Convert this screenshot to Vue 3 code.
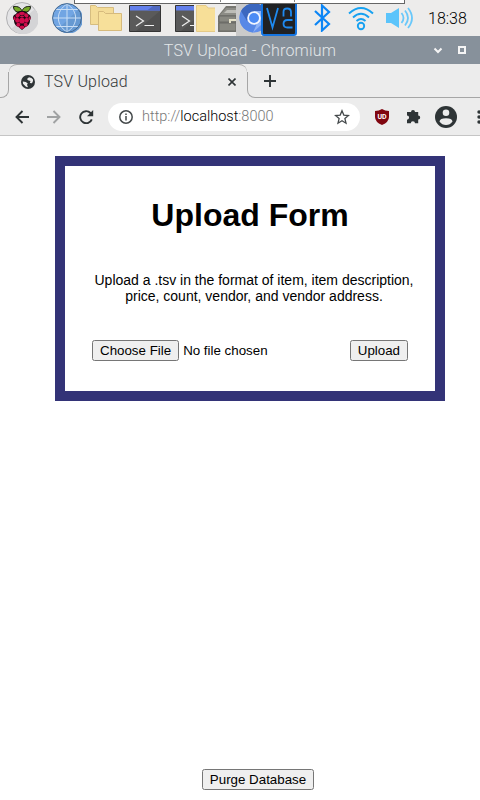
<script setup>
import { ref } from 'vue'

const clock = ref('18:38')
const host = 'localhost'
</script>

<template>
  <div class="desktop">
    <header class="taskbar">
      <svg class="raspberry" width="32" height="32" viewBox="0 0 32 32">
        <circle cx="16" cy="16" r="15.5" fill="#e4e4e6" stroke="#b0b0b2" />
        <path d="M5 27 29 7A15 15 0 0 1 6 27z" fill="#d4d4d6" />
        <path d="M15.700 10C11 11 7.500 9 7.500 4.500 12 4 16 6 15.700 10M16.300 10C21 11 24.500 9 24.500 4.500 20 4 16 6 16.300 10" fill="#75a928" stroke="#171b12" stroke-width="1" />
        <path d="M16 9c3 0 5 .5 6 3 3 1 3.500 4 2 6 0 4-2 6-4.500 7L16 28l-3.500-3C10 24 8 22 8 18c-2-2-1-5 2-6 1-2.500 3-3 6-3z" fill="#170811" />
        <g fill="#d00c4c">
          <ellipse cx="16" cy="11.400" rx="2.900" ry="1.700" />
          <ellipse cx="11.700" cy="13.500" rx="2.300" ry="1.900" transform="rotate(-35 11.700 13.500)" />
          <ellipse cx="20.300" cy="13.500" rx="2.300" ry="1.900" transform="rotate(35 20.300 13.500)" />
          <circle cx="16" cy="18.700" r="2.900" />
          <ellipse cx="11.300" cy="18.200" rx="2.100" ry="2.500" />
          <ellipse cx="20.700" cy="18.200" rx="2.100" ry="2.500" />
          <circle cx="12.300" cy="22.700" r="2" />
          <circle cx="19.700" cy="22.700" r="2" />
          <ellipse cx="16" cy="25.200" rx="2.500" ry="1.700" />
          <ellipse cx="8.500" cy="16.300" rx="1" ry="1.900" />
          <ellipse cx="23.500" cy="16.300" rx="1" ry="1.900" />
          <ellipse cx="16" cy="14.600" rx="2" ry="1" />
        </g>
      </svg>
      <svg class="globe" width="30" height="30" viewBox="0 0 30 30">
        <circle cx="15" cy="15" r="14.500" fill="#71a5e3" />
        <path d="M27 6A14.500 14.500 0 0 1 6 26z" fill="#6699d2" />
        <path d="M15 1v28M1 15h28M3.500 6.500h23M3.500 23.500h23M15 1C3.500 8 3.500 22 15 29M15 1c11.500 7 11.500 21 0 28" fill="none" stroke="#c9def5" stroke-width="1" />
        <circle cx="15" cy="15" r="14.400" fill="none" stroke="#44688f" />
      </svg>
      <svg class="folders" width="32" height="26" viewBox="0 0 32 26">
        <path d="M.5.5h5l2 2h16v17H.5z" fill="#f4dc98" stroke="#d6bd80" />
        <path d="M8.500 6.500h5l2 2h16v17h-23z" fill="#f7e09a" stroke="#d6ba7c" />
      </svg>
      <svg class="terminal" width="32" height="27" viewBox="0 0 32 27">
        <path d="M.5.500h31v26H.500z" fill="#5a5a5a" stroke="#353535" />
        <path d="M31 6v20H7z" fill="#505050" />
        <path d="M1 1h30v4.500H1z" fill="#6380ec" /><path d="M24 1h7v4.500H18z" fill="#5069c1" />
        <path d="m7 11 7.500 5L7 21M15.500 20.500H25" fill="none" stroke="#efefef" stroke-width="1.200" />
      </svg>
      <svg class="terminal-cut" width="19" height="27" viewBox="0 0 19 27">
        <path d="M20 .5H.5v26H20" fill="#5a5a5a" stroke="#353535" />
        <path d="M19 15v11H6z" fill="#505050" />
        <path d="M1 1h18v4.500H1z" fill="#6380ec" />
        <path d="m7 11 7.500 5L7 21M15 20.500h4" fill="none" stroke="#efefef" stroke-width="1.200" />
      </svg>
      <svg class="folder-cut" width="19" height="27" viewBox="0 0 19 27">
        <path d="M20 3h-8L10 .500H.500v26H20" fill="#f7df98" stroke="#e5ca87" />
      </svg>
      <svg class="cabinet" width="18" height="27" viewBox="0 0 18 27">
        <path d="M0 11 8 1h10v26H0z" fill="#777771" />
        <path d="m2 10 6-7h10v7z" fill="#8d8d87" /><path d="M6 8 9 5h9v3z" fill="#bdbdb7" />
        <path d="M1 11h17v6H1zM1 18h17v8H1z" fill="#898982" stroke="#6b6b66" />
        <path d="M12 18v-3h6" fill="none" stroke="#e4e0c8" stroke-width="2" />
      </svg>
      <svg class="chromium" width="25" height="32" viewBox="0 0 25 32">
        <path d="M0 0h25v32H0z" fill="#cacaca" />
        <circle cx="18" cy="14" r="14.500" fill="#608fed" />
        <path d="M5 7A15 15 0 0 0 17 28.500L24 17z" fill="#5788e6" />
        <path d="M5 7a15 15 0 0 1 20-6v7h-9l-5 9z" fill="#3b67bf" />
        <path d="M18 7h7v14l-8 7.500 4-9z" fill="#8cb2f7" />
        <circle cx="18" cy="14" r="6.800" fill="#f2f6ff" /><circle cx="18" cy="14" r="5" fill="#4b8bf5" />
      </svg>
      <svg class="vnc" width="36" height="33" viewBox="0 0 36 33">
        <rect x="1" y="-3" width="34" height="35" rx="2" fill="#202225" stroke="#1474e0" stroke-width="2" />
        <g fill="none" stroke="#1e8af0" stroke-width="1.800">
          <path d="m6 5 5.500 19.500L17 5" />
          <path d="M22.500 13.500V9Q22.500 5.500 26.200 5.500T30 9v4.500" />
          <path d="M31.500 17H26.500Q22.500 17 22.500 20.800T26.500 24.500H31.500" />
        </g>
      </svg>
      <svg class="bluetooth" width="18" height="28" viewBox="0 0 18 28">
        <path d="m2 7 14 13-7 6.500V1.500L16 8 2 21" fill="none" stroke="#0b85f5" stroke-width="2.200" />
      </svg>
      <svg class="wifi" width="26" height="24" viewBox="0 0 26 24">
        <g fill="none" stroke="#16a1f1" stroke-width="1.900">
          <path d="M1 6.500Q13-4.500 25 6.500M5 10.500q8-7.500 16 0M8.500 14q4.500-4 9 0" />
          <circle cx="13" cy="19" r="3.200" />
        </g>
      </svg>
      <svg class="volume" width="27" height="22" viewBox="0 0 27 22">
        <path d="M0 6h5l8-5v20l-8-5H0z" fill="#5bc4fb" />
        <path d="M15.500 6q4 5 0 10M19 3.500q6 7.500 0 15M22 1q8 10 0 20" fill="none" stroke="#69c8fa" stroke-width="1.800" />
      </svg>
      <time class="clock">{{ clock }}</time>
      <div class="menu-edge"><i></i><i></i></div>
    </header>

    <div class="titlebar">
      <span class="window-title">TSV Upload - Chromium</span>
      <svg class="window-controls" width="34" height="10" viewBox="0 0 34 10">
        <path d="m1.500 3.500 3.500 3.500 3.500-3.500" fill="none" stroke="#f5f5f5" stroke-width="2" />
        <rect x="26" y="2" width="6" height="6" fill="none" stroke="#f5f5f5" stroke-width="2" />
      </svg>
    </div>

    <div class="tabstrip">
      <div class="tab-left"></div>
      <div class="tab">
        <svg width="14" height="14" viewBox="0 0 14 14">
          <circle cx="7" cy="7" r="7" fill="#2e3436" />
          <path d="M8 2.200 6 4l1 1.200L9.500 6l-.7 2L11 8.200l1-2.200V4.500L10.500 3zM1.800 6.500l3 .5 2 1.500-.8 1.300 1 2.500-2-.5-3-3z" fill="#ececec" />
        </svg>
        <span class="tab-name">TSV Upload</span>
        <svg class="tab-close" width="8" height="8" viewBox="0 0 8 8"><path d="m.5.500 7 7m0-7-7 7" stroke="#2e3436" stroke-width="1.600" /></svg>
      </div>
      <div class="tab-right">
        <svg width="12" height="12" viewBox="0 0 12 12"><path d="M6 0v12M0 6h12" stroke="#2e3436" stroke-width="1.900" /></svg>
      </div>
    </div>

    <nav class="toolbar">
      <svg class="back" width="14" height="14" viewBox="0 0 14 14"><path d="M14 7H1.500M7.500 1l-6 6 6 6" fill="none" stroke="#2e3436" stroke-width="1.900" /></svg>
      <svg class="forward" width="14" height="14" viewBox="0 0 14 14"><path d="M0 7h12.500M6.500 1l6 6-6 6" fill="none" stroke="#a0a2a3" stroke-width="1.900" /></svg>
      <svg class="reload" width="15" height="14" viewBox="0 0 15 14"><path d="M12.800 9.300A6 6 0 1 1 11.500 3L13 4.500" fill="none" stroke="#2e3436" stroke-width="1.900" /><path d="M14.200 0v6.200H8z" fill="#2e3436" /></svg>
      <div class="address">
        <svg width="14" height="14" viewBox="0 0 14 14"><circle cx="7" cy="7" r="6.200" fill="none" stroke="#44494b" stroke-width="1.500" /><path d="M7 6v4.500M7 3.500V5" stroke="#44494b" stroke-width="1.500" /></svg>
        <span class="url">http://<b>{{ host }}</b>:8000</span>
        <svg class="star" width="16" height="16" viewBox="0 0 16 16"><path d="m8 1.800 1.800 4.300 4.700.4-3.600 3.100 1.100 4.600-4-2.500-4 2.500 1.100-4.600L1.500 6.500l4.700-.4z" fill="none" stroke="#44494b" stroke-width="1.300" /></svg>
      </div>
      <svg class="shield" width="14" height="16" viewBox="0 0 14 16">
        <path d="M7 0q3 2 7 2v6q0 5-7 8-7-3-7-8V2q4 0 7-2z" fill="#800610" />
        <text x="7" y="9.700" text-anchor="middle" class="shield-text">UD</text>
      </svg>
      <svg class="puzzle" width="15" height="15" viewBox="0 0 15 15"><path d="M1.500 3H5a2 2 0 1 1 4 0h3.200v3.500a2 2 0 1 1 0 4V14.300H9a2 2 0 1 0-4.200 0H1v-3.600a2.100 2.100 0 0 0 0-4.200V3z" fill="#2e3436" /></svg>
      <svg class="avatar" width="22" height="22" viewBox="0 0 22 22"><circle cx="11" cy="11" r="11" fill="#2e3436" /><circle cx="11" cy="6.800" r="3.300" fill="#ececec" /><path d="M4.500 15.500Q5 12.200 11 12.200t6.500 3.300Q15 19 11 19t-6.500-3.500z" fill="#ececec" /></svg>
      <svg class="more" width="4" height="14" viewBox="0 0 4 14"><circle cx="2" cy="2" r="1.700" /><circle cx="2" cy="7" r="1.700" /><circle cx="2" cy="12" r="1.700" /></svg>
    </nav>

    <main class="page">
      <section class="card">
        <h1>Upload Form</h1>
        <p>Upload a .tsv in the format of item, item description, price, count, vendor, and vendor address.</p>
        <form class="upload-row" @submit.prevent>
          <input type="file" class="file" />
          <button type="submit">Upload</button>
        </form>
      </section>
      <button class="purge" type="button">Purge Database</button>
    </main>
  </div>
</template>

<style>
body { background: #fff; overflow: hidden; }
</style>

<style scoped>
.desktop { width: 480px; height: 800px; overflow: hidden; display: flex; flex-direction: column; font-family: Roboto, sans-serif; }
svg { display: block; flex: none; }
.taskbar { position: relative; height: 36px; flex: none; display: flex; align-items: flex-start; background: #edeceb; }
.raspberry { margin: 2px 0 0 6px; }
.globe { margin: 3px 0 0 14px; }
.folders { margin: 5px 0 0 8px; }
.terminal { margin: 5px 0 0 7px; }
.terminal-cut { margin: 5px 0 0 14px; }
.folder-cut { margin: 5px 0 0 2px; }
.cabinet { margin: 5px 0 0 3px; }
.chromium { margin: 4px 0 0 0; }
.vnc { margin: 3px 0 0 0; }
.bluetooth { margin: 4px 0 0 16px; }
.wifi { margin: 7px 0 0 17px; }
.volume { margin: 7px 0 0 12px; }
.clock { margin-left: 15px; font-size: 16px; font-weight: 300; line-height: 38px; color: #000; }
.menu-edge { position: absolute; left: 74px; top: 0; width: 331px; height: 4px; box-sizing: border-box; background: #fff; border: 1px solid #666; border-top: 0; display: flex; padding-left: 145px; gap: 73px; }
.menu-edge i { width: 1px; height: 2px; background: #888; }
.titlebar { height: 28px; flex: none; display: flex; align-items: center; justify-content: flex-end; background: #87919b; }
.window-title { font-size: 16px; font-weight: 300; letter-spacing: 0.17px; color: #e4e7e9; white-space: nowrap; margin-right: 97px; }
.window-controls { margin-right: 13px; }
.tabstrip { height: 34px; flex: none; display: flex; background: #ececec; }
.tab-left { width: 9px; box-sizing: border-box; border-bottom: 1px solid #a6a6a6; border-right: 1px solid #a6a6a6; border-bottom-right-radius: 8px; margin-top: 8px; }
.tab { width: 238px; box-sizing: border-box; display: flex; align-items: center; padding: 0 12px; border-top: 1px solid #a6a6a6; border-radius: 8px 8px 0 0; }
.tab-name { margin-left: 9px; font-size: 16px; font-weight: 300; letter-spacing: 0.18px; color: #36393a; }
.tab-close { margin-left: auto; margin-right: -1px; }
.tab-right { flex: 1; box-sizing: border-box; border-left: 1px solid #a6a6a6; border-bottom: 1px solid #a6a6a6; border-bottom-left-radius: 8px; margin-top: 8px; padding: 3px 0 0 16px; }
.toolbar { height: 38px; flex: none; box-sizing: border-box; display: flex; align-items: center; background: #ececec; border-bottom: 1px solid #c5c5c5; }
.back { margin-left: 15px; }
.forward { margin-left: 18px; }
.reload { margin-left: 18px; }
.address { width: 252px; height: 28px; box-sizing: border-box; margin-left: 14px; padding: 0 10px 0 11px; border-radius: 14px; background: #fff; display: flex; align-items: center; flex: none; }
.url { margin-left: 9px; font-size: 14.5px; font-weight: 300; color: #777; }
.url b { font-weight: 300; color: #000; }
.star { margin-left: auto; }
.shield { margin-left: 15px; }
.shield-text { font: 700 7px Roboto, sans-serif; fill: #fff; }
.puzzle { margin-left: 17px; }
.avatar { margin-left: 14px; }
.more { margin-left: 20px; fill: #2e3436; }
.page { flex: 1; display: flex; flex-direction: column; align-items: center; padding: 20px 0 10px; font-family: "Liberation Sans", Arial, sans-serif; color: #000; }
.card { width: 390px; height: 245px; box-sizing: border-box; margin-left: 20px; border: 10px solid #333377; background: #fff; display: flex; flex-direction: column; }
h1 { margin: 31px 0 0; font-size: 32px; line-height: 36px; text-align: center; }
p { margin: 39px 20px 0 28px; font-size: 14px; line-height: 16px; text-align: center; }
.upload-row { display: flex; justify-content: space-between; margin: 36px 27px 0; }
.file, button { font: 13.333px "Liberation Sans", Arial, sans-serif; }
.file { width: 240px; height: 21px; }
button { height: 21px; padding: 1px 6px; }
.purge { margin: auto 0 0 36px; }
</style>
